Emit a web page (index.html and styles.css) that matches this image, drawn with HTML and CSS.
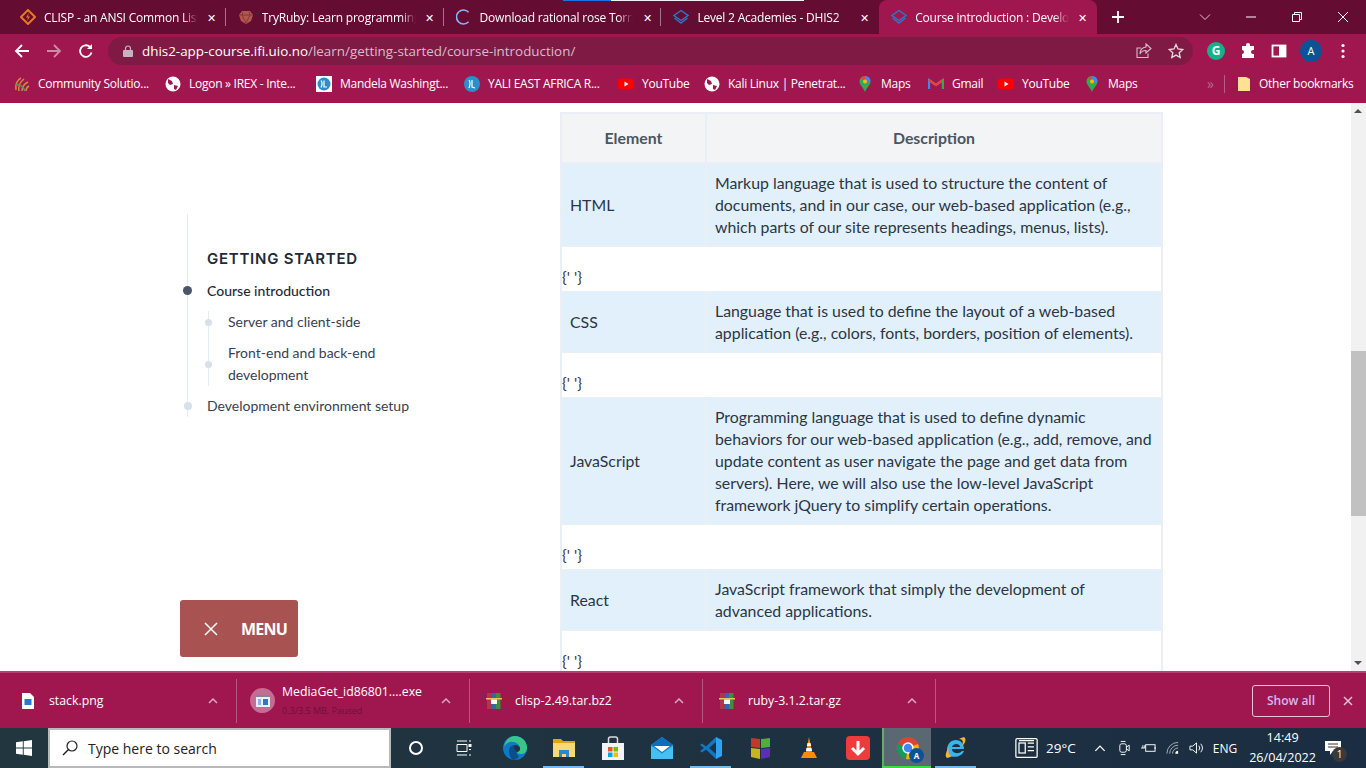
FILE: index.html
```html
<!DOCTYPE html>
<html lang="en">
<head>
<meta charset="utf-8">
<title>Course introduction</title>
<link rel="stylesheet" href="styles.css">
</head>
<body>
<div class="screen">
  <div class="tabstrip">
    <div class="load-strip"></div>
    <div class="tab">
      <svg class="favicon" viewBox="0 0 16 16"><path d="M8 1l7 7-7 7-7-7z" fill="none" stroke="#e8791f" stroke-width="2"/><path d="M8.800 4L6 8.600h2L7.200 12 10 7.400H8z" fill="#e8791f"/></svg>
      <span class="tab-title">CLISP - an ANSI Common Lisp</span><span class="tab-x">✕</span>
    </div>
    <div class="tab">
      <svg class="favicon" viewBox="0 0 16 16"><path d="M4 2h8l3 4-2 6-5 3-5-3-2-6z" fill="#b5564f"/><path d="M1 6h14M5 3L4 6l4 8 4-8-1-3" fill="none" stroke="#7d3b40"/></svg>
      <span class="tab-title">TryRuby: Learn programming</span><span class="tab-x">✕</span>
    </div>
    <div class="tab">
      <svg class="favicon" viewBox="0 0 16 16"><path d="M12.600 3.200A7 7 0 1 0 12.600 12.800" fill="none" stroke="#8ab4f8" stroke-width="1.600"/></svg>
      <span class="tab-title">Download rational rose Torrent</span><span class="tab-x">✕</span>
    </div>
    <div class="tab tab-last">
      <svg class="favicon" viewBox="0 0 16 16"><path d="M8 1.500l7 5-7 5-7-5z" fill="none" stroke="#2a78c7" stroke-width="1.400"/><path d="M1.500 9l6.500 5 6.500-5" fill="none" stroke="#2a78c7" stroke-width="1.400"/></svg>
      <span class="tab-title">Level 2 Academies - DHIS2</span><span class="tab-x">✕</span>
    </div>
    <div class="tab tab-active">
      <svg class="favicon" viewBox="0 0 16 16"><path d="M8 1.500l7 5-7 5-7-5z" fill="none" stroke="#2a78c7" stroke-width="1.400"/><path d="M1.500 9l6.500 5 6.500-5" fill="none" stroke="#2a78c7" stroke-width="1.400"/></svg>
      <span class="tab-title">Course introduction : Development</span><span class="tab-x">✕</span>
    </div>
    <svg class="new-tab" viewBox="0 0 14 14"><path d="M7 1v12M1 7h12" stroke="#fff" stroke-width="1.800"/></svg>
    <div class="window-controls">
      <svg viewBox="0 0 12 12"><path d="M1 3.500l5 5 5-5" fill="none" stroke="#e6c4d2"/></svg>
      <svg viewBox="0 0 12 12"><path d="M1 6h10" stroke="#fff"/></svg>
      <svg viewBox="0 0 12 12"><path d="M1.500 3.500h7v7h-7zM3.500 3.500v-2h7v7h-2" fill="none" stroke="#fff"/></svg>
      <svg viewBox="0 0 12 12"><path d="M1 1l10 10M11 1L1 11" stroke="#fff"/></svg>
    </div>
  </div>

  <div class="toolbar">
    <svg class="nav-icon" viewBox="0 0 16 16"><path d="M15 8H2M8 2L2 8l6 6" fill="none" stroke="#fff" stroke-width="1.800"/></svg>
    <svg class="nav-icon" viewBox="0 0 16 16"><path d="M1 8h13M8 2l6 6-6 6" fill="none" stroke="#cf8aa6" stroke-width="1.800"/></svg>
    <svg class="nav-icon" viewBox="0 0 16 16"><path d="M13.500 9.500A5.800 5.800 0 1 1 12 4" fill="none" stroke="#fff" stroke-width="1.800"/><path d="M14 1v5H9z" fill="#fff"/></svg>
    <div class="omnibox">
      <svg class="lock" viewBox="0 0 10 12"><path d="M2.500 5V3.500a2.500 2.500 0 0 1 5 0V5" fill="none" stroke="#c9b2bf" stroke-width="1.200"/><rect y="5" width="10" height="7" rx="1" fill="#c9b2bf"/></svg>
      <span class="url"><span class="url-host">dhis2-app-course.ifi.uio.no</span>/learn/getting-started/course-introduction/</span>
      <svg class="omni-icon" viewBox="0 0 16 16"><path d="M10 1l5 4.500L10 10V7.500C7 7.500 5 8.500 4 11c0-4 2-6.500 6-7zM12 10.500V14.500H1V5h4" fill="none" stroke="#d6bcc9" stroke-width="1.100"/></svg>
      <svg class="omni-icon" viewBox="0 0 16 16"><path d="M8 1.500l2 4.500 4.800.5-3.600 3.200 1 4.800L8 12.100 3.800 14.500l1-4.800L1.200 6.500 6 6z" fill="none" stroke="#ead8e1" stroke-width="1.300"/></svg>
    </div>
    <div class="ext-icons">
      <span class="grammarly">G</span>
      <svg class="ext" viewBox="0 0 16 16"><path d="M6 2a2 2 0 0 1 4 0v1h4v4h-1a2 2 0 0 0 0 4h1v4H2v-4a2 2 0 0 0 0-4V3h4z" fill="#fff"/></svg>
      <svg class="ext" viewBox="0 0 16 16"><rect x="1.500" y="2.500" width="13" height="11" fill="none" stroke="#fff" stroke-width="1.800"/><rect x="8" y="2.500" width="6.500" height="11" fill="#fff"/></svg>
      <span class="avatar">A</span>
      <svg class="menu-dots" viewBox="0 0 4 16"><circle cx="2" cy="2.500" r="1.600" fill="#fff"/><circle cx="2" cy="8" r="1.600" fill="#fff"/><circle cx="2" cy="13.500" r="1.600" fill="#fff"/></svg>
    </div>
  </div>

  <div class="bookmarks">
    <span class="bm bm-1"><svg class="bm-icon" viewBox="0 0 16 16"><path d="M2 14c-1-5 1-10 5-12M5 15C4 10 6 6 10 3M8 15c0-4 2-7 6-9M12 15c0-2 1-4 3-5" fill="none" stroke="#d58a3a" stroke-width="1.500"/><path d="M1 9c4-1 8 1 10 6" fill="none" stroke="#4f9a5f" stroke-width="1.400"/></svg>Community Solutio...</span>
    <span class="bm bm-2"><svg class="bm-icon" viewBox="0 0 16 16"><circle cx="8" cy="8" r="7.500" fill="#fff"/><path d="M3 3l4 2 1 3-3 1-2-2zM9 9l4 1-2 4-2-1z" fill="#a0174f"/></svg>Logon » IREX - Inte...</span>
    <span class="bm bm-3"><svg class="bm-icon" viewBox="0 0 16 16"><rect width="16" height="16" fill="#fff"/><circle cx="8" cy="8" r="6.500" fill="#2b8fc9"/><path d="M5 4.500c2 2.500 1 5 0 7M8 4.500v6.500l3 0" fill="none" stroke="#fff" stroke-width="1.200"/></svg>Mandela Washingt...</span>
    <span class="bm bm-4"><svg class="bm-icon" viewBox="0 0 16 16"><circle cx="8" cy="8" r="8" fill="#2b8fc9"/><path d="M5 4c2 3 1 5 0 8M8 4v7l3 1" fill="none" stroke="#fff" stroke-width="1.200"/></svg>YALI EAST AFRICA R...</span>
    <span class="bm bm-5"><svg class="bm-icon" viewBox="0 0 16 16"><rect y="2.500" width="16" height="11" rx="3" fill="#f00"/><path d="M6.500 5.500l4 2.500-4 2.500z" fill="#fff"/></svg>YouTube</span>
    <span class="bm bm-6"><svg class="bm-icon" viewBox="0 0 16 16"><circle cx="8" cy="8" r="7.500" fill="#fff"/><path d="M3 3l4 2 1 3-3 1-2-2zM9 9l4 1-2 4-2-1z" fill="#a0174f"/></svg>Kali Linux | Penetrat...</span>
    <span class="bm bm-7"><svg class="bm-icon" viewBox="0 0 16 16"><path d="M8 0a5.500 5.500 0 0 1 5.500 5.500C13.500 9 10 11 8 16 6 11 2.500 9 2.500 5.500A5.500 5.500 0 0 1 8 0z" fill="#34a853"/><path d="M8 0a5.500 5.500 0 0 1 5.500 5.500L8 8z" fill="#4285f4"/><path d="M8 0a5.500 5.500 0 0 0-4 1.700L8 5.500z" fill="#ea4335"/><circle cx="8" cy="5.500" r="2" fill="#fbbc04"/></svg>Maps</span>
    <span class="bm bm-8"><svg class="bm-icon" viewBox="0 0 16 16"><path d="M1 13V4l7 5 7-5v9" fill="none" stroke="#4285f4" stroke-width="2.200"/><path d="M1 4l7 5 7-5" fill="none" stroke="#ea4335" stroke-width="2.200"/><path d="M15 4v9" stroke="#34a853" stroke-width="2.200"/></svg>Gmail</span>
    <span class="bm bm-9"><svg class="bm-icon" viewBox="0 0 16 16"><rect y="2.500" width="16" height="11" rx="3" fill="#f00"/><path d="M6.500 5.500l4 2.500-4 2.500z" fill="#fff"/></svg>YouTube</span>
    <span class="bm bm-10"><svg class="bm-icon" viewBox="0 0 16 16"><path d="M8 0a5.500 5.500 0 0 1 5.500 5.500C13.500 9 10 11 8 16 6 11 2.500 9 2.500 5.500A5.500 5.500 0 0 1 8 0z" fill="#34a853"/><path d="M8 0a5.500 5.500 0 0 1 5.500 5.500L8 8z" fill="#4285f4"/><path d="M8 0a5.500 5.500 0 0 0-4 1.700L8 5.500z" fill="#ea4335"/><circle cx="8" cy="5.500" r="2" fill="#fbbc04"/></svg>Maps</span>
    <span class="bm-more">»</span>
    <span class="bm-sep"></span>
    <span class="bm bm-other"><svg class="bm-icon" viewBox="0 0 16 16"><path d="M2 1h8l4 2v12H2z" fill="#fde293"/></svg>Other bookmarks</span>
  </div>

  <div class="viewport">
    <main class="page">
      <nav class="sidenav">
        <h2 class="nav-heading">GETTING STARTED</h2>
        <a class="nav-item nav-current">Course introduction</a>
        <div class="subnav">
          <a class="sub-item">Server and client-side</a>
          <a class="sub-item">Front-end and back-end development</a>
        </div>
        <a class="nav-item">Development environment setup</a>
      </nav>
      <article class="article">
        <div class="table-head">
          <div class="cell cell-head">Element</div>
          <div class="cell cell-head">Description</div>
        </div>
        <div class="table-row">
          <div class="cell">HTML</div>
          <div class="cell">Markup language that is used to structure the content of documents, and in our case, our web-based application (e.g., which parts of our site represents headings, menus, lists).</div>
        </div>
        <div class="stray">{' '}</div>
        <div class="table-row">
          <div class="cell">CSS</div>
          <div class="cell">Language that is used to define the layout of a web-based application (e.g., colors, fonts, borders, position of elements).</div>
        </div>
        <div class="stray stray-wide">{' '}</div>
        <div class="table-row">
          <div class="cell">JavaScript</div>
          <div class="cell">Programming language that is used to define dynamic behaviors for our web-based application (e.g., add, remove, and update content as user navigate the page and get data from servers). Here, we will also use the low-level JavaScript framework jQuery to simplify certain operations.</div>
        </div>
        <div class="stray">{' '}</div>
        <div class="table-row">
          <div class="cell">React</div>
          <div class="cell">JavaScript framework that simply the development of advanced applications.</div>
        </div>
        <div class="stray">{' '}</div>
      </article>
    </main>
    <div class="scrollbar">
      <span class="arrow-up"></span>
      <div class="thumb"></div>
      <span class="arrow-down"></span>
    </div>
    <button class="menu-button">
      <svg viewBox="0 0 14 14"><path d="M1 1l12 12M13 1L1 13" stroke="#fff" stroke-width="1.500"/></svg>
      <span>MENU</span>
    </button>
  </div>

  <div class="downloads">
    <div class="dl dl-1">
      <svg class="dl-icon" viewBox="0 0 12 16"><path d="M0 0h8l4 4v12H0z" fill="#fff"/><rect x="2.500" y="6" width="7" height="6" fill="#2a78c7"/></svg>
      <span class="dl-name">stack.png</span>
      <svg class="chev" viewBox="0 0 10 6"><path d="M1 5l4-4 4 4" fill="none" stroke="#d9a8bd" stroke-width="1.500"/></svg>
    </div>
    <div class="dl dl-2">
      <span class="dl-badge"><svg viewBox="0 0 14 12"><rect width="14" height="12" fill="#eef"/><rect y="0" width="14" height="2" fill="#789"/><rect x="7" y="4" width="5" height="6" fill="#2a78c7"/><path d="M2 5h3M2 7h3M2 9h3" stroke="#2a78c7"/></svg></span>
      <span class="dl-text"><span class="dl-name">MediaGet_id86801....exe</span><span class="dl-status">0.3/3.5 MB, Paused</span></span>
      <svg class="chev" viewBox="0 0 10 6"><path d="M1 5l4-4 4 4" fill="none" stroke="#d9a8bd" stroke-width="1.500"/></svg>
    </div>
    <div class="dl dl-3">
      <svg class="dl-icon-rar" viewBox="0 0 16 16"><rect x="1" width="4.500" height="16" fill="#b5344a"/><rect x="5.500" width="4.500" height="16" fill="#3566a8"/><rect x="10" width="4.500" height="16" fill="#3d8f3d"/><rect x="0" y="5" width="16" height="1.500" fill="#e8c45a"/><rect x="5" y="6.500" width="6" height="4.500" fill="#fff"/></svg>
      <span class="dl-name">clisp-2.49.tar.bz2</span>
      <svg class="chev" viewBox="0 0 10 6"><path d="M1 5l4-4 4 4" fill="none" stroke="#d9a8bd" stroke-width="1.500"/></svg>
    </div>
    <div class="dl dl-4">
      <svg class="dl-icon-rar" viewBox="0 0 16 16"><rect x="1" width="4.500" height="16" fill="#b5344a"/><rect x="5.500" width="4.500" height="16" fill="#3566a8"/><rect x="10" width="4.500" height="16" fill="#3d8f3d"/><rect x="0" y="5" width="16" height="1.500" fill="#e8c45a"/><rect x="5" y="6.500" width="6" height="4.500" fill="#fff"/></svg>
      <span class="dl-name">ruby-3.1.2.tar.gz</span>
      <svg class="chev" viewBox="0 0 10 6"><path d="M1 5l4-4 4 4" fill="none" stroke="#d9a8bd" stroke-width="1.500"/></svg>
    </div>
    <button class="show-all">Show all</button>
    <svg class="dl-close" viewBox="0 0 10 10"><path d="M1 1l8 8M9 1L1 9" stroke="#e6c4d2" stroke-width="1.500"/></svg>
  </div>

  <div class="taskbar">
    <svg class="win-logo" viewBox="0 0 16 16"><path d="M0 2.300L6.800 1.300V7.500H0zM7.700 1.200L16 0V7.500H7.700zM0 8.400H6.800V14.700L0 13.700zM7.700 8.400H16V16L7.700 14.800z" fill="#fff"/></svg>
    <div class="search-box">
      <svg viewBox="0 0 16 16"><circle cx="10" cy="6" r="5" fill="none" stroke="#222" stroke-width="1.200"/><path d="M6.500 9.500L1 15" stroke="#222" stroke-width="1.400"/></svg>
      <span>Type here to search</span>
    </div>
    <svg class="tb-cortana" viewBox="0 0 16 16"><circle cx="8" cy="8" r="6" fill="none" stroke="#fff" stroke-width="2"/></svg>
    <svg class="tb-tasks" viewBox="0 0 16 16"><path d="M1 1h10M1 15h10M1 4.500h10v7H1zM13 1h2M13 9.500h2M13 15h2" fill="none" stroke="#fff"/><rect x="12.500" y="4" width="3" height="3" fill="#fff"/></svg>
    <span class="tb-app"><svg viewBox="0 0 24 24"><circle cx="12" cy="12" r="12" fill="#0f78c8"/><path d="M12 0a12 12 0 0 1 12 12c0 4-3 6-6 6-2 0-4-1-4-2 2 0 3-1 3-3 0-5-5-8-10-7-3 .500-5 3-6 5C2 5 6 0 12 0z" fill="#39c58a"/><path d="M6 15c0-4 3-6 6-6 2 0 4 1 5 3 0 2-1 3-3 4-1 1 0 3 2 4-1 2-3 4-6 4-3-2-4-6-4-9z" fill="#0b4f8a"/><path d="M12 9c2 0 4 1 5 3 0 2-1 3-3 4-2-2-4-5-2-7z" fill="#1f3440"/></svg></span>
    <span class="tb-app tb-running"><svg viewBox="0 0 24 24"><path d="M1 3h8l2 2h12v16H1z" fill="#d9a520"/><rect x="1" y="7" width="22" height="14" fill="#f9d976"/><path d="M7 14h10v7h-3v-3h-4v3H7z" fill="#2a88d0"/></svg></span>
    <span class="tb-app"><svg viewBox="0 0 24 24"><path d="M1 7h22v17H1z" fill="#f4f4f4"/><path d="M7.500 7V3a2 2 0 0 1 2-2h5a2 2 0 0 1 2 2v4" fill="none" stroke="#ddd" stroke-width="1.500"/><rect x="7" y="11" width="4.500" height="4.500" fill="#e8532b"/><rect x="12.500" y="11" width="4.500" height="4.500" fill="#7fba00"/><rect x="7" y="16.500" width="4.500" height="4.500" fill="#00a4ef"/><rect x="12.500" y="16.500" width="4.500" height="4.500" fill="#ffb900"/></svg></span>
    <span class="tb-app"><svg viewBox="0 0 24 24"><path d="M12 1l11 8v14H1V9z" fill="#2da7ea"/><path d="M1 9l11-8 11 8-11 8z" fill="#0f6cbd"/><path d="M4 10h16l-8 6z" fill="#fff"/><path d="M1 10l11 8 11-8v13H1z" fill="#45c0f5"/></svg></span>
    <span class="tb-app tb-running"><svg viewBox="0 0 24 24"><path d="M17 1l6 3v16l-6 3z" fill="#2aa4f4"/><path d="M17 1L7 10.500 3 7.500 1 9l4 3-4 3 2 1.500 4-3L17 23v-5l-7-6 7-6z" fill="#0e78c4"/></svg></span>
    <span class="tb-app"><svg viewBox="0 0 24 24"><path d="M3 2l9 1v9l-9-1z" fill="#c0392b"/><path d="M13 3l9-1v9l-9 1z" fill="#4caf3f"/><path d="M3 12l9 1v10l-9-2z" fill="#c7b41f"/><path d="M13 13l9-1v9l-9 2z" fill="#5b2fb5"/></svg></span>
    <span class="tb-app"><svg viewBox="0 0 24 24"><path d="M12 1l3 15H9z" fill="#ff8c00"/><path d="M10.500 7h3l.6 3h-4.200zM9.500 12h5l.6 3H8.900z" fill="#fff"/><path d="M4 22l3-6h10l3 6z" fill="#ff8c00"/></svg></span>
    <span class="tb-app"><svg viewBox="0 0 24 24"><rect width="24" height="24" rx="4" fill="#ee3b3b"/><path d="M12 5v13M6 12l6 6 6-6" fill="none" stroke="#fff" stroke-width="3"/></svg></span>
    <span class="tb-app tb-chrome"><svg viewBox="0 0 24 24"><circle cx="12" cy="12" r="11" fill="#db4437"/><path d="M12 12L2 8a11 11 0 0 0 8 15z" fill="#0f9d58"/><path d="M12 12l10-4a11 11 0 0 1-12 15z" fill="#f4b400"/><circle cx="12" cy="12" r="5" fill="#4285f4" stroke="#fff" stroke-width="1.500"/></svg><span class="chrome-a">A</span></span>
    <span class="tb-app tb-running"><svg viewBox="0 0 24 24"><path d="M3 14c0-6 4-10 9-10s8 4 8 9H8c0 4 6 6 10 2h2c-2 6-12 8-16 3zM8 11h8c0-4-7-4-8 0z" fill="#37b5ef"/><path d="M20 1c3 2 1 7-2 9 1-3 2-7-3-7 2-1 4-2 5-2zM3 22c-3-2 0-8 2-11-1 4-1 8 3 9-2 1-4 2-5 2z" fill="#f2b632"/></svg></span>
    <div class="tray">
      <svg class="tray-news" viewBox="0 0 18 16"><rect x=".5" y=".5" width="17" height="15" rx="1" fill="none" stroke="#fff"/><rect x="3" y="4" width="5" height="8" fill="none" stroke="#fff"/><path d="M10 4h5M10 7h5M10 10h5M3 2h12" stroke="#fff"/></svg>
      <span class="tray-temp">29°C</span>
      <svg class="tray-caret" viewBox="0 0 10 6"><path d="M1 5l4-4 4 4" fill="none" stroke="#fff" stroke-width="1.100"/></svg>
      <svg class="tray-i" viewBox="0 0 16 16"><rect x="3" y="3.500" width="7" height="9" rx="2" fill="none" stroke="#fff"/><path d="M10 7l3-2v6l-3-2M4 1h5M4 15h5" fill="none" stroke="#fff"/></svg>
      <svg class="tray-i" viewBox="0 0 16 16"><rect x="5" y="4.500" width="10" height="7" fill="none" stroke="#fff"/><path d="M0 8h4M2 5v3M4 5v3M15 7v2" stroke="#fff"/></svg>
      <svg class="tray-i" viewBox="0 0 16 16"><path d="M2 14a12 12 0 0 1 12-12M5 14a9 9 0 0 1 9-9M8 14a6 6 0 0 1 6-6" fill="none" stroke="#aab4bc"/><path d="M11 14a3 3 0 0 1 3-3v3z" fill="#fff"/></svg>
      <svg class="tray-i" viewBox="0 0 16 16"><path d="M1 6h3l4-3.500v11L4 10H1zM10.500 5.500a4 4 0 0 1 0 5M12.500 3.500a7 7 0 0 1 0 9" fill="none" stroke="#fff"/></svg>
      <span class="tray-lang">ENG</span>
      <span class="tray-clock"><span>14:49</span><span>26/04/2022</span></span>
      <span class="tray-notify"><svg viewBox="0 0 16 14"><path d="M0 0h16v10H8l-3 4v-4H0z" fill="#fff"/><path d="M3 3h10M3 6h10" stroke="#333"/></svg><span class="notify-count">1</span></span>
    </div>
  </div>
</div>
</body>
</html>
```

FILE: styles.css
```css
* { box-sizing: border-box; }
html, body { margin: 0; height: 100%; overflow: hidden; }
body { font-family: "Open Sans", "Liberation Sans", sans-serif; background: #fff; }
svg { display: block; flex: none; }
.screen { width: 1366px; height: 768px; display: flex; flex-direction: column; }

.tabstrip { height: 34px; flex: none; background: #650c33; display: flex; align-items: center; padding-left: 8px; color: #fff; font-size: 12px; letter-spacing: -.2px; position: relative; }
.load-strip { position: absolute; left: 563px; top: 0; width: 241px; height: 1px; background: linear-gradient(90deg, #1a73e8 48px, #f1f1f1 48px); }
.tab { width: 217.800px; height: 34px; flex: none; display: flex; align-items: center; padding: 0 10px 0 12px; position: relative; }
.tab::after { content: ""; position: absolute; right: 0; top: 8px; height: 18px; width: 1px; background: #a2798a; }
.tab-last::after, .tab-active::after { display: none; }
.tab-active { background: #a0174f; border-radius: 8px 8px 0 0; width: 218px; }
.favicon { width: 16px; height: 16px; }
.tab-title { flex: 1; min-width: 0; margin-left: 8px; white-space: nowrap; overflow: hidden; -webkit-mask-image: linear-gradient(90deg, #000 90%, transparent); mask-image: linear-gradient(90deg, #000 90%, transparent); }
.tab-x { font-size: 11px; width: 18px; text-align: right; flex: none; }
.new-tab { width: 14px; height: 14px; margin-left: 14px; }
.window-controls { margin-left: auto; display: flex; gap: 34px; padding-right: 17px; align-items: center; }
.window-controls svg { width: 12px; height: 12px; }

.toolbar { height: 33px; flex: none; background: #a0174f; display: flex; align-items: center; padding-left: 14px; }
.nav-icon { width: 16px; height: 16px; margin-right: 16px; }
.nav-icon:nth-child(3) { margin-right: 14px; }
.omnibox { width: 1085px; height: 28px; flex: none; border-radius: 14px; background: #7f1a45; display: flex; align-items: center; padding: 0 9px 0 15px; }
.lock { width: 10px; height: 12px; }
.url { margin-left: 9px; flex: 1; font-size: 13.400px; color: #d9bccb; white-space: nowrap; }
.url-host { color: #fff; }
.omni-icon { width: 16px; height: 16px; margin-left: 16px; }
.ext-icons { display: flex; align-items: center; margin-left: 14px; }
.grammarly { width: 18px; height: 18px; border-radius: 50%; background: #15b28a; color: #fff; font-size: 12px; font-weight: 700; line-height: 18px; text-align: center; }
.ext { width: 16px; height: 16px; margin-left: 15px; }
.avatar { width: 22px; height: 22px; margin-left: 13px; border-radius: 50%; background: #0b5394; color: #fff; font-size: 11px; line-height: 22px; text-align: center; }
.menu-dots { width: 4px; height: 16px; margin-left: 19px; }

.bookmarks { height: 36px; flex: none; background: #a0174f; display: flex; align-items: center; color: #fff; font-size: 12px; letter-spacing: -.27px; white-space: nowrap; position: relative; border-bottom: 3px solid #a0174f; }
.bm { display: flex; align-items: center; gap: 8px; flex: none; }
.bm-icon { width: 16px; height: 16px; }
.bm-1 { margin-left: 14px; width: 151px; }
.bm-2 { width: 151px; }
.bm-3 { width: 148px; }
.bm-4 { width: 154px; }
.bm-5 { width: 86px; }
.bm-6 { width: 153px; }
.bm-7 { width: 71px; }
.bm-8 { width: 70px; }
.bm-9 { width: 86px; }
.bm-10 { width: 84px; }
.bm-more { width: 11px; margin-left: 39px; color: #b36b8b; font-size: 14px; line-height: 16px; flex: none; }
.bm-sep { width: 1px; height: 18px; background: #b35f84; margin-left: 6px; flex: none; }
.bm-other { margin-left: 11px; gap: 7px; }

.viewport { flex: 1; min-height: 0; background: #fff; position: relative; display: flex; overflow: hidden; }
.page { flex: 1; min-width: 0; display: flex; align-items: flex-start; font-family: Lato, sans-serif; color: #374151; overflow: hidden; padding-left: 187px; }
.sidenav { flex: none; margin-top: 111px; padding: 32px 0 0 19px; border-left: 1px solid #e5ebf1; width: 250px; font-size: 14px; line-height: 22px; margin-right: 123px; }
.nav-heading { font-family: Inter, sans-serif; font-size: 15px; font-weight: 600; letter-spacing: .75px; line-height: 26px; margin: 0 0 8px; color: #1f2937; }
.nav-item { display: block; position: relative; margin-bottom: 9px; }
.nav-item:last-child { margin-bottom: 0; }
.nav-item::before { content: ""; position: absolute; left: -23px; top: 7px; width: 8px; height: 8px; border-radius: 50%; background: #d8e0e8; }
.nav-current { font-weight: 500; color: #1f2937; }
.nav-current::before { left: -24px; top: 6px; width: 9px; height: 9px; background: #4a5568; }
.subnav { margin-left: 1px; border-left: 1px solid #e5ebf1; padding-left: 19px; margin-bottom: 9px; }
.sub-item { display: block; position: relative; margin-bottom: 9px; }
.sub-item:last-child { margin-bottom: 0; }
.sub-item::before { content: ""; position: absolute; left: -23px; top: 50%; margin-top: -3px; width: 7px; height: 7px; border-radius: 50%; background: #d8e0e8; }

.article { width: 603px; flex: none; margin-top: 9px; border-left: 2px solid #e9eff4; border-right: 2px solid #e9eff4; font-size: 15.850px; line-height: 22px; color: #2a3646; }
.table-head, .table-row { display: grid; grid-template-columns: 143px 1fr; }
.table-head { background: #f3f4f6; border-top: 2px solid #e9eff4; border-bottom: 1px solid #e9eff4; height: 51px; }
.table-row { background: #e2f0fc; border-top: 1px solid #e9eff4; border-bottom: 1px solid #e9eff4; }
.cell { padding: 8px; display: flex; align-items: center; }
.cell + .cell { border-left: 2px solid #e9eff4; }
.cell-head { font-weight: 700; color: #4b5563; justify-content: center; }
.stray { height: 43.500px; padding-top: 19px; line-height: 22px; color: #4a3a1f; }
.stray-wide { height: 44.500px; }

.scrollbar { width: 15px; flex: none; background: #f1f1f1; position: relative; }
.arrow-up, .arrow-down { position: absolute; left: 3px; width: 0; height: 0; border-left: 4px solid transparent; border-right: 4px solid transparent; }
.arrow-up { top: 6px; border-bottom: 4px solid #505050; }
.arrow-down { bottom: 6px; border-top: 4px solid #505050; }
.thumb { position: absolute; left: 0; right: 0; top: 248px; height: 165px; background: #c1c1c1; }

.menu-button { position: absolute; left: 180px; top: 497px; width: 118px; height: 57px; border: 0; border-radius: 3px; background: #a95252; color: #fff; display: flex; align-items: center; padding: 0 0 0 24px; font-family: "Open Sans", sans-serif; font-weight: 700; font-size: 16px; }
.menu-button svg { width: 14px; height: 14px; }
.menu-button span { margin-left: 23px; letter-spacing: -.8px; }

.downloads { height: 57px; background: #a0174f; border-top: 2px solid #b4416f; display: flex; align-items: center; color: #fff; font-size: 12.300px; flex: none; }
.dl { height: 44px; display: flex; align-items: center; border-right: 1px solid #b8587f; flex: none; position: relative; }
.dl-1 { width: 237px; padding-left: 22px; }
.dl-2 { width: 233px; padding-left: 13px; }
.dl-3 { width: 233px; padding-left: 16px; }
.dl-4 { width: 233px; padding-left: 16px; }
.dl-icon { width: 12px; height: 16px; }
.dl-icon-rar { width: 16px; height: 16px; }
.dl-name { margin-left: 15px; white-space: nowrap; }
.dl-3 .dl-name, .dl-4 .dl-name { margin-left: 13px; }
.dl-badge { width: 25px; height: 25px; border-radius: 50%; background: #c46c92; display: flex; align-items: center; justify-content: center; flex: none; }
.dl-badge svg { width: 14px; height: 12px; }
.dl-text { display: flex; flex-direction: column; margin-left: 7px; }
.dl-text .dl-name { margin-left: 0; line-height: 18px; }
.dl-status { font-size: 9px; color: #6d1039; line-height: 16px; padding-top: 2px; }
.chev { width: 10px; height: 6px; position: absolute; right: 18px; top: 19px; }
.show-all { margin-left: auto; width: 78px; height: 32px; background: transparent; border: 1px solid #e6c4d2; border-radius: 3px; color: #d4b8f0; font-family: "Open Sans", sans-serif; font-size: 12px; font-weight: 600; padding: 0; margin-right: 13px; }
.dl-close { width: 10px; height: 10px; margin-right: 13px; }

.taskbar { height: 40px; flex: none; background: linear-gradient(90deg, #22363f, #1b2d42); display: flex; align-items: center; color: #fff; font-size: 13px; }
.win-logo { width: 16px; height: 16px; margin-left: 16px; }
.search-box { width: 343px; height: 40px; margin-left: 16px; background: #fff; border: 2px solid #b9b9b9; display: flex; align-items: center; color: #222; font-size: 14px; padding-left: 12px; }
.search-box svg { width: 16px; height: 16px; }
.search-box span { margin-left: 10px; }
.tb-cortana { width: 16px; height: 16px; margin-left: 17px; }
.tb-tasks { width: 16px; height: 16px; margin-left: 32px; }
.tb-app { width: 49px; height: 40px; display: flex; align-items: center; justify-content: center; position: relative; flex: none; }
.tb-app svg { width: 24px; height: 24px; }
.tb-tasks + .tb-app { margin-left: 18px; }
.tb-running::after { content: ""; position: absolute; left: 4px; right: 4px; bottom: 0; height: 2px; background: #76b9ed; }
.tb-chrome { background: #5a6873; border-left: 2px solid #6aa86f; }
.tb-chrome::after { content: ""; position: absolute; left: -2px; right: 0; bottom: 0; height: 2px; background: #3ddc3d; }
.chrome-a { position: absolute; right: 7px; bottom: 5px; width: 15px; height: 15px; border-radius: 50%; background: #0b5394; font-size: 8px; font-weight: 700; line-height: 15px; text-align: center; }
.tray { margin-left: auto; display: flex; align-items: center; height: 40px; }
.tray-news { width: 23px; height: 20px; }
.tray-temp { margin-left: 8px; font-size: 13.500px; }
.tray-caret { width: 12px; height: 7px; margin-left: 18px; margin-right: 2px; }
.tray-i { width: 15px; height: 16px; margin-left: 9px; }
.tray-lang { margin-left: 9px; font-size: 12px; }
.tray-clock { display: flex; flex-direction: column; align-items: center; font-size: 12.600px; line-height: 20px; margin-left: 12px; }
.tray-notify { position: relative; width: 16px; margin: 0 25px 0 9px; }
.tray-notify svg { width: 16px; height: 14px; }
.notify-count { position: absolute; left: 7px; top: 6px; width: 15px; height: 15px; border-radius: 50%; background: #3a3a3a; font-size: 10px; line-height: 15px; text-align: center; }
```
